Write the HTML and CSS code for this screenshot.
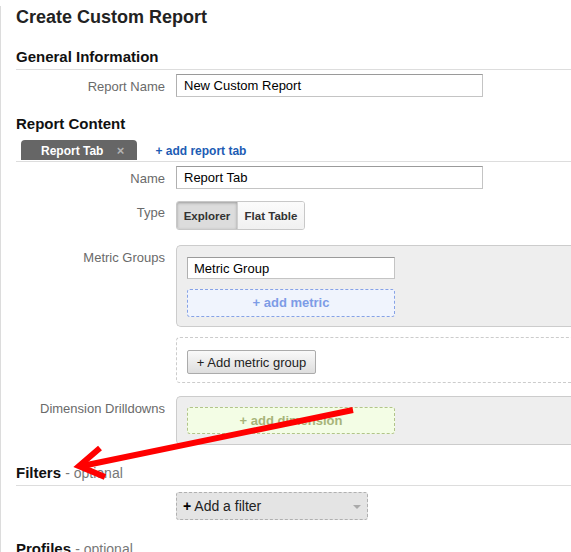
FILE: index.html
```html
<!DOCTYPE html>
<html lang="en">
<head>
  <meta charset="UTF-8" />
  <title>Create Custom Report</title>
  <link rel="stylesheet" href="styles.css">
</head>
<body>
  <div class="page">
    <h1 class="page-title">Create Custom Report</h1>

    <h2 class="section-title general-title">General Information</h2>
    <div class="field-row row-report-name">
      <label class="field-label">Report Name</label>
      <div class="field"><input type="text" class="text-input wide" value="New Custom Report" /></div>
    </div>

    <h2 class="section-title content-title">Report Content</h2>
    <div class="tab-bar">
      <div class="tab">Report Tab <span class="tab-close">&times;</span></div>
      <a href="#" class="add-tab">+ add report tab</a>
    </div>

    <div class="field-row row-tab-name">
      <label class="field-label">Name</label>
      <div class="field"><input type="text" class="text-input wide" value="Report Tab" /></div>
    </div>

    <div class="field-row row-type">
      <label class="field-label">Type</label>
      <div class="field">
        <div class="seg-group">
          <button class="seg-btn seg-explorer active">Explorer</button>
          <button class="seg-btn seg-flat">Flat Table</button>
        </div>
      </div>
    </div>

    <div class="field-row row-metrics">
      <label class="field-label">Metric Groups</label>
      <div class="field">
        <div class="panel metric-panel">
          <input type="text" class="text-input group-input" value="Metric Group" />
          <div class="drop-box metric-box">+ add metric</div>
        </div>
      </div>
    </div>

    <div class="field-row row-add-group">
      <span></span>
      <div class="field">
        <div class="dashed-wrap">
          <button class="plain-btn">+ Add metric group</button>
        </div>
      </div>
    </div>

    <div class="field-row row-dims">
      <label class="field-label">Dimension Drilldowns</label>
      <div class="field">
        <div class="panel dim-panel">
          <div class="drop-box dim-box">+ add dimension</div>
        </div>
      </div>
    </div>

    <h2 class="section-title filters-title">Filters <span class="optional">- optional</span></h2>
    <div class="field-row row-filter">
      <span></span>
      <div class="field">
        <div class="select-box"><b>+</b> Add a filter<span class="caret"></span></div>
      </div>
    </div>

    <h2 class="section-title profiles-title">Profiles <span class="optional">- optional</span></h2>
  </div>

  <svg class="arrow" width="571" height="552" viewBox="0 0 571 552">
    <path d="M353 410 L82 466" stroke="#ff0000" stroke-width="6" fill="none" />
    <path d="M100 448 L79 466 L105 477" stroke="#ff0000" stroke-width="6" fill="none" stroke-linejoin="miter" />
  </svg>
</body>
</html>
```

FILE: styles.css
```css
body {
  margin: 0;
  font-family: "Liberation Sans", Arial, sans-serif;
  color: #222;
  background: #fff;
  overflow: hidden;
}
.page {
  border-left: 1px solid #dcdcdc;
  padding-left: 15px;
  min-height: 552px;
  box-sizing: border-box;
}
.page-title {
  margin: 6px 0 0;
  font-size: 18px;
  line-height: 22px;
  font-weight: bold;
  color: #222;
}
.section-title {
  margin: 0;
  font-size: 15px;
  line-height: 18px;
  font-weight: bold;
  color: #111;
}
.general-title {
  margin-top: 20px;
  padding-bottom: 3px;
  border-bottom: 1px solid #dddddd;
}
.content-title {
  margin-top: 18px;
}
.filters-title {
  margin-top: 19px;
  padding-bottom: 3px;
  border-bottom: 1px solid #dddddd;
}
.profiles-title {
  margin-top: 20px;
}
.optional {
  font-size: 14px;
  font-weight: normal;
  color: #777;
}
.field-row {
  display: grid;
  grid-template-columns: 149px 1fr;
  column-gap: 11px;
}
.field-label {
  text-align: right;
  font-size: 13px;
  line-height: 16px;
  color: #6a6a6a;
  padding-top: 5px;
}
.row-report-name { margin-top: 4px; }
.row-tab-name { margin-top: 4px; }
.row-type { margin-top: 12px; }
.row-type .field-label { padding-top: 4px; }
.row-metrics { margin-top: 15px; }
.row-add-group { margin-top: 10px; }
.row-dims { margin-top: 13px; }
.row-dims .field-label { padding-top: 5px; }
.row-filter { margin-top: 6px; }

.text-input {
  display: block;
  box-sizing: border-box;
  height: 23px;
  margin: 0;
  padding: 0 7px;
  font-family: "Liberation Sans", Arial, sans-serif;
  font-size: 13px;
  color: #000;
  background: #fff;
  border: 1px solid #c4c4c4;
  border-top-color: #9a9a9a;
  border-left-color: #b0b0b0;
  outline: none;
}
.wide {
  width: 307px;
}

/* tabs */
.tab-bar {
  margin-top: 7px;
  display: flex;
  align-items: flex-end;
  padding-bottom: 1px;
  border-bottom: 1px solid #dddddd;
}
.tab {
  margin-left: 5px;
  height: 20px;
  line-height: 22px;
  padding: 0 13px 0 20px;
  background: #666666;
  color: #fff;
  font-size: 12px;
  font-weight: bold;
  border-radius: 4px 4px 0 0;
}
.tab-close {
  margin-left: 10px;
  color: #b4b4b4;
  font-size: 13px;
}
.add-tab {
  margin-left: 18px;
  height: 20px;
  line-height: 22px;
  color: #1d5cb4;
  font-size: 12px;
  font-weight: bold;
  text-decoration: none;
}

/* explorer / flat table */
.seg-group {
  display: inline-flex;
  border: 1px solid #c8c8c8;
  border-radius: 3px;
  overflow: hidden;
}
.seg-btn {
  height: 27px;
  margin: 0;
  padding: 0;
  border: none;
  font-family: "Liberation Sans", Arial, sans-serif;
  font-size: 11.5px;
  font-weight: bold;
  color: #333;
  background: linear-gradient(#fbfbfb, #f1f1f1);
  text-align: center;
}
.seg-explorer {
  width: 61px;
  border-right: 1px solid #d0d0d0;
}
.seg-flat {
  width: 66px;
}
.seg-btn.active {
  background: #dcdcdc;
  box-shadow: inset 0 1px 3px rgba(0, 0, 0, 0.3);
}

/* grey panels */
.panel {
  background: #eeeeee;
  border: 1px solid #cccccc;
  border-right: none;
  border-radius: 5px 0 0 5px;
  margin-right: -2px;
}
.metric-panel {
  padding: 11px 10px 9px;
}
.dim-panel {
  padding: 10px;
}
.group-input {
  width: 208px;
  height: 22px;
  padding: 0 6px;
}
.drop-box {
  box-sizing: border-box;
  width: 208px;
  text-align: center;
  font-size: 13px;
  font-weight: bold;
  border-radius: 3px;
}
.metric-box {
  margin-top: 10px;
  height: 28px;
  line-height: 26px;
  background: #f0f4fd;
  border: 1px dashed #86a2e6;
  color: #7d9ce6;
}
.dim-box {
  height: 27px;
  line-height: 25px;
  background: #f3fde5;
  border: 1px dashed #b2c48a;
  color: #a7b479;
}

.dashed-wrap {
  border: 1px dashed #cccccc;
  border-right: none;
  border-radius: 4px 0 0 4px;
  padding: 12px 10px 8px;
  margin-right: -2px;
}
.plain-btn {
  display: block;
  height: 24px;
  width: 129px;
  margin: 0;
  padding: 0;
  font-family: "Liberation Sans", Arial, sans-serif;
  font-size: 13px;
  color: #222;
  background: linear-gradient(#f9f9f9, #dedede);
  border: 1px solid #ababab;
  border-radius: 2px;
}

/* filter dropdown */
.select-box {
  position: relative;
  box-sizing: border-box;
  width: 192px;
  height: 28px;
  line-height: 26px;
  padding-left: 6px;
  background: #e4e4e4;
  border: 1px dashed #b0b0b0;
  border-radius: 3px;
  font-size: 14px;
  color: #222;
}
.select-box b {
  color: #000;
}
.caret {
  position: absolute;
  right: 6px;
  top: 12px;
  width: 0;
  height: 0;
  border-left: 4px solid transparent;
  border-right: 4px solid transparent;
  border-top: 4px solid #aaaaaa;
}

.arrow {
  position: absolute;
  left: 0;
  top: 0;
  pointer-events: none;
}
```
